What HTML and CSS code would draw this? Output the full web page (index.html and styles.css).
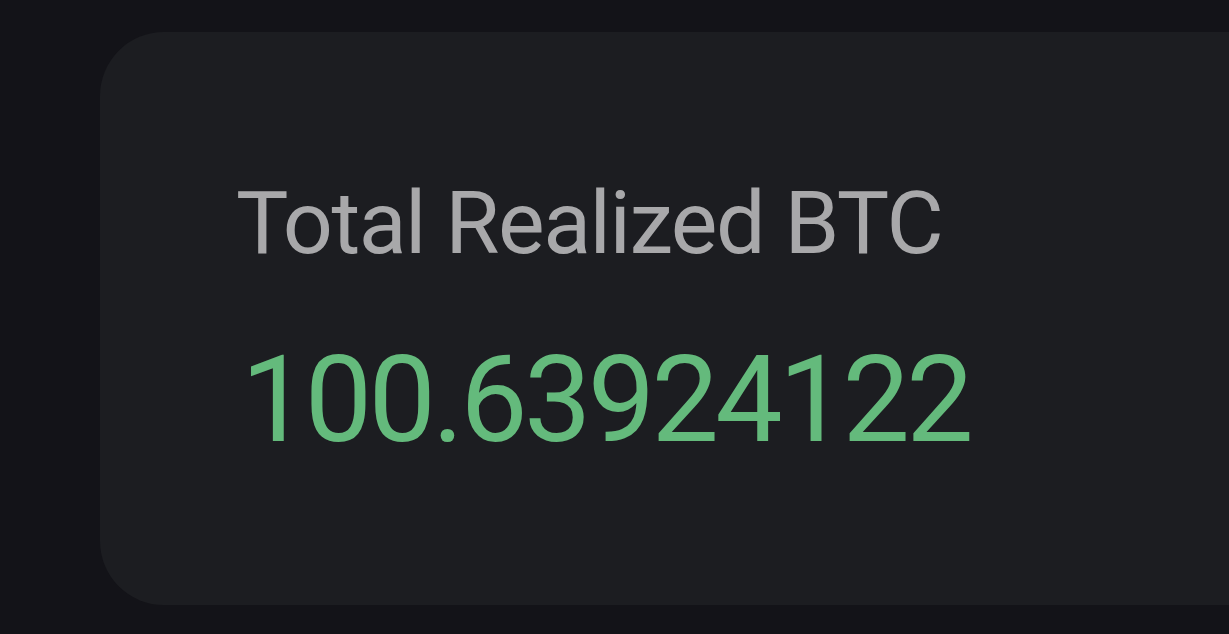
FILE: index.html
```html
<!DOCTYPE html>
<html>
<head>
<meta charset="utf-8">
<link rel="stylesheet" href="styles.css">
</head>
<body>
<div class="page">
  <div class="card">
    <div class="label">Total Realized BTC</div>
    <div class="value">100.63924122</div>
  </div>
</div>
</body>
</html>
```
FILE: styles.css
```css
html, body {
  margin: 0;
  padding: 0;
  background: #131318;
  width: 1229px;
  height: 634px;
  overflow: hidden;
}
.page {
  padding: 32px 0 29px 100px;
  height: 634px;
  box-sizing: border-box;
  display: flex;
}
.card {
  flex: 1;
  background: #1c1d21;
  border-radius: 64px 0 0 64px;
  padding: 141px 0 0 136px;
  display: flex;
  flex-direction: column;
  font-family: Roboto, "Liberation Sans", sans-serif;
}
.label {
  color: #a8a8aa;
  font-size: 88px;
  line-height: 100px;
  letter-spacing: -1.5px;
}
.value {
  color: #64ba7c;
  font-size: 120px;
  line-height: 130px;
  letter-spacing: -3.7px;
  margin: 62px 0 0 5px;
}
```
